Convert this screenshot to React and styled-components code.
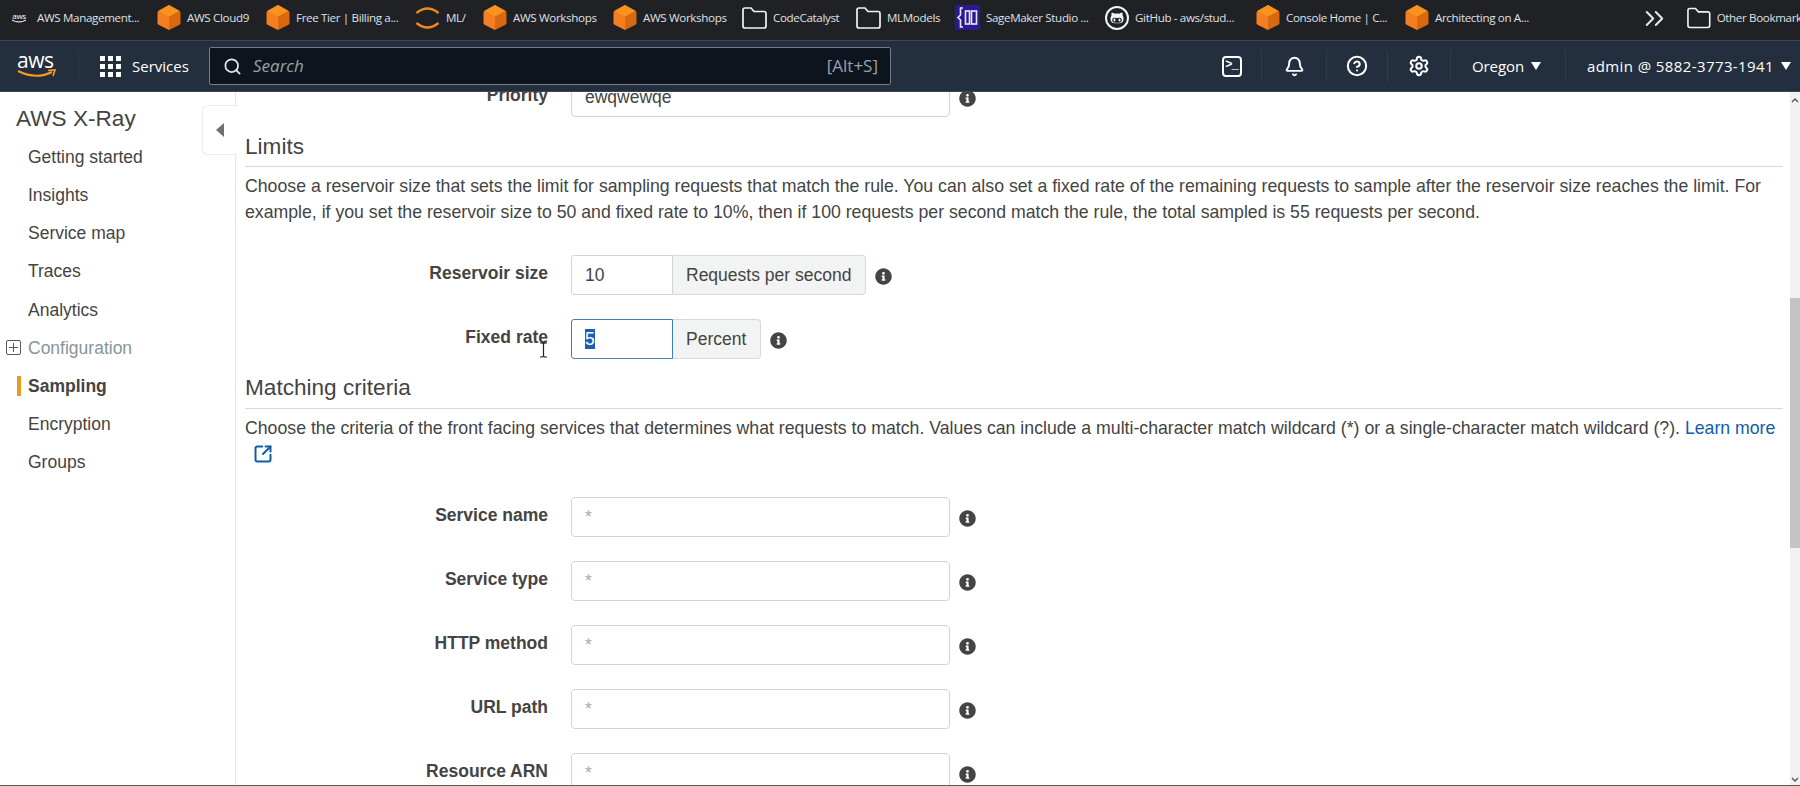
import React from "react";
import styled, { createGlobalStyle } from "styled-components";
import { Bell, ChevronsRight, CircleHelp, Search, Settings, SquareArrowOutUpRight } from "lucide-react";
import { FaGithubAlt, FaInfoCircle } from "react-icons/fa";

const Global = createGlobalStyle`
  html, body { margin: 0; padding: 0; background: #fff; }
  body { font-family: "Liberation Sans", Arial, sans-serif; color: #444; }
  * { box-sizing: border-box; }
`;

const Page = styled.div`
  width: 1800px;
  height: 786px;
  display: flex;
  flex-direction: column;
  overflow: hidden;
`;

/* Bookmark bar */
const BookmarkBar = styled.div`
  flex: none;
  height: 41px;
  padding: 0 0 5px 11px;
  display: flex;
  align-items: center;
  background: #202124;
  border-bottom: 1px solid #3f4650;
  overflow: hidden;
`;
const Bookmark = styled.div`
  flex: none;
  width: ${(p) => p.$w}px;
  display: flex;
  align-items: center;
  gap: ${(p) => p.$gap ?? 6}px;
  font-family: "Open Sans", sans-serif;
  font-size: 11.6px;
  letter-spacing: -0.35px;
  color: #dfe1e5;
  white-space: nowrap;
`;
const FavText = styled.div`
  width: 16px;
  font-size: 8px;
  line-height: 7px;
  text-align: center;
  color: #fff;
  svg { display: block; }
`;
const Overflow = styled.div`
  flex: none;
  margin-left: 107px;
  width: 48px;
  height: 30px;
  color: #e8eaed;
`;
const GitRing = styled.div`
  width: 24px;
  height: 24px;
  border: 2px solid #f1f3f4;
  border-radius: 50%;
  display: flex;
  align-items: center;
  justify-content: center;
  color: #f1f3f4;
`;

const Cube = () => (
  <svg width="24" height="27" viewBox="0 0 24 27">
    <path d="M12 1 L22 6.5 Q23.5 7.4 23.5 9 V19 Q23.5 20.4 22 21 L12 26 Z" fill="#d9690f" />
    <path d="M12 1 L2 6.5 Q.5 7.4 .5 9 V19 Q.5 20.4 2 21 L12 26 Z" fill="#f57f20" />
    <path d="M12 1 L22.5 7 L12 12.5 L1.5 7 Z" fill="#f7931e" />
  </svg>
);
const MlIcon = () => (
  <svg width="25" height="26" viewBox="0 0 25 26" fill="none" stroke="#f08a24" strokeWidth="2.4">
    <path d="M1.5 8 Q12.5 -1 23.5 8" />
    <path d="M1.5 18 Q12.5 27 23.5 18" />
  </svg>
);
const Folder = () => (
  <svg width="25" height="24" viewBox="0 0 25 24" fill="none" stroke="#f1f3f4" strokeWidth="1.7">
    <path d="M1 4 Q1 2 3 2 H9 L12 5.5 H22 Q24 5.5 24 7.5 V20 Q24 22 22 22 H3 Q1 22 1 20 Z" />
  </svg>
);
const SageIcon = () => (
  <svg width="25" height="25" viewBox="0 0 25 25" fill="none">
    <rect width="25" height="25" fill="#2b1a8f" />
    <path d="M8 3 H5.5 V10 L3 12.5 L5.5 15 V22 H8" stroke="#e8e6ff" strokeWidth="1.6" />
    <rect x="10.5" y="6" width="4" height="13" stroke="#e8e6ff" strokeWidth="1.6" />
    <rect x="16.5" y="6" width="5" height="13" stroke="#e8e6ff" strokeWidth="1.6" />
  </svg>
);
const AwsFav = () => (
  <FavText>
    aws
    <svg width="16" height="5" viewBox="0 0 16 5" fill="none" stroke="#fff" strokeWidth="1">
      <path d="M1 1 Q8 5 15 1" />
    </svg>
  </FavText>
);
const GitIcon = () => (
  <GitRing>
    <FaGithubAlt size={14} />
  </GitRing>
);

const bookmarks = [
  { Icon: AwsFav, label: "AWS Management...", w: 146, gap: 10 },
  { Icon: Cube, label: "AWS Cloud9", w: 109 },
  { Icon: Cube, label: "Free Tier | Billing a...", w: 149 },
  { Icon: MlIcon, label: "ML/", w: 68 },
  { Icon: Cube, label: "AWS Workshops", w: 130 },
  { Icon: Cube, label: "AWS Workshops", w: 129 },
  { Icon: Folder, label: "CodeCatalyst", w: 114 },
  { Icon: Folder, label: "MLModels", w: 99 },
  { Icon: SageIcon, label: "SageMaker Studio ...", w: 150 },
  { Icon: GitIcon, label: "GitHub - aws/stud...", w: 151 },
  { Icon: Cube, label: "Console Home | C...", w: 149 },
  { Icon: Cube, label: "Architecting on A...", w: 127 },
];

/* Console nav */
const Nav = styled.header`
  flex: none;
  height: 51px;
  display: flex;
  align-items: center;
  background: #232f3e;
  border-bottom: 1px solid #3c4650;
  color: #fff;
  font-family: "Open Sans", sans-serif;
  font-size: 15px;
`;
const Logo = styled.div`
  flex: none;
  width: 62px;
  margin-left: 17px;
  height: 32px;
  border-right: 1px solid #2d3947;
  font-family: "Open Sans", sans-serif;
  font-size: 21px;
  line-height: 20px;
  color: #fff;
  position: relative;
  letter-spacing: -0.5px;
  svg { display: block; margin-top: -1px; }
`;
const ServicesBtn = styled.div`
  flex: none;
  width: 130px;
  padding-left: 21px;
  display: flex;
  align-items: center;
  gap: 11px;
`;
const SearchBox = styled.div`
  flex: none;
  width: 682px;
  height: 38px;
  padding: 0 12px 0 13px;
  display: flex;
  align-items: center;
  gap: 11px;
  background: #0d141d;
  border: 1px solid #737b84;
  border-radius: 2px;
  color: #9aa2a9;
  font-size: 17px;
  line-height: 34px;
`;
const SearchWord = styled.span`
  flex: 1;
  font-style: italic;
`;
const NavSpacer = styled.div`
  flex: none;
  width: 311px;
`;
const NavIcon = styled.div`
  flex: none;
  width: ${(p) => p.$w}px;
  height: 32px;
  display: flex;
  align-items: center;
  justify-content: center;
  border-right: 1px solid #2f3c4b;
`;
const Term = styled.div`
  width: 20px;
  height: 21px;
  border: 2px solid #fff;
  border-radius: 4px;
  font-family: "Liberation Mono", monospace;
  font-weight: 700;
  font-size: 12px;
  line-height: 15px;
  text-align: center;
  letter-spacing: -1px;
`;
const Menu = styled.div`
  flex: none;
  width: ${(p) => p.$w}px;
  height: 32px;
  padding-left: ${(p) => p.$pl}px;
  display: flex;
  align-items: center;
  gap: 7px;
  white-space: nowrap;
  letter-spacing: ${(p) => p.$ls}px;
  border-right: ${(p) => (p.$plain ? "none" : "1px solid #2f3c4b")};
`;
const Caret = styled.span`
  width: 0;
  height: 0;
  border-left: 5px solid transparent;
  border-right: 5px solid transparent;
  border-top: 8px solid #fff;
`;
const DotGrid = () => (
  <svg width="21" height="21" viewBox="0 0 21 21" fill="#fff">
    {[0, 8, 16].map((y) => [0, 8, 16].map((x) => <rect key={`${x}-${y}`} x={x} y={y} width="5" height="5" />))}
  </svg>
);

/* Body */
const Body = styled.div`
  flex: 1;
  min-height: 0;
  display: flex;
  position: relative;
  border-bottom: 1px solid #5a5a5a;
`;
const Sidebar = styled.aside`
  flex: none;
  width: 236px;
  padding-top: 8px;
  border-right: 1px solid #e3e6e6;
  font-size: 17.5px;
`;
const SideTitle = styled.div`
  height: 36px;
  margin-bottom: 2px;
  padding: 1px 0 0 16px;
  font-size: 22.6px;
  line-height: 36px;
  color: #444;
`;
const SideItem = styled.div`
  position: relative;
  height: 38.125px;
  padding-left: 28px;
  line-height: 38px;
  color: ${(p) => (p.$muted ? "#879596" : "#444")};
  font-weight: ${(p) => (p.$active ? 700 : 400)};
`;
const ActiveBar = styled.span`
  position: absolute;
  left: 17px;
  top: 9px;
  width: 4px;
  height: 20px;
  background: #ec9a1f;
`;
const PlusBox = styled.span`
  position: absolute;
  left: 6px;
  top: 11px;
  width: 15px;
  height: 15px;
  border: 1px solid #545b64;
  border-radius: 2px;
  &::before, &::after {
    content: "";
    position: absolute;
    background: #545b64;
  }
  &::before { left: 2px; right: 2px; top: 6px; height: 1px; }
  &::after { top: 2px; bottom: 2px; left: 6px; width: 1px; }
`;
const CollapseTab = styled.div`
  position: absolute;
  left: 202px;
  top: 13px;
  width: 35px;
  height: 50px;
  display: flex;
  align-items: center;
  padding-left: 13px;
  background: #fff;
  border: 1px solid #eaeded;
  border-right: none;
  border-radius: 6px 0 0 6px;
  &::before {
    content: "";
    border-top: 7px solid transparent;
    border-bottom: 7px solid transparent;
    border-right: 8px solid #6b7278;
  }
`;
const Main = styled.main`
  flex: 1;
  min-width: 0;
  padding: 0 7px 0 9px;
  overflow: hidden;
  font-size: 17.5px;
`;
const Scrolled = styled.div`
  margin-top: -15px;
`;
const Row = styled.div`
  display: flex;
  height: 40px;
  margin-bottom: ${(p) => (p.$last ? 0 : 24)}px;
`;
const Label = styled.div`
  flex: none;
  width: 303px;
  margin-right: 23px;
  text-align: right;
  font-weight: 700;
  line-height: 37px;
  color: #444;
`;
const Field = styled.div`
  flex: none;
  width: ${(p) => p.$w ?? 379}px;
  height: 40px;
  padding-left: 13px;
  line-height: 38px;
  background: #fff;
  border: 1px solid ${(p) => (p.$focus ? "#3b7fc4" : "#d3d5d5")};
  border-radius: ${(p) => (p.$joined ? "3px 0 0 3px" : "4px")};
  color: #444;
`;
const Star = styled.span`
  color: #a9adb0;
`;
const Picked = styled.span`
  background: #1d5fb8;
  color: #fff;
`;
const Addon = styled.div`
  flex: none;
  height: 40px;
  padding: 0 14px 0 13px;
  line-height: 38px;
  background: #f2f3f3;
  border: 1px solid #d5dbdb;
  border-left: none;
  border-radius: 0 4px 4px 0;
  white-space: nowrap;
`;
const Info = styled(FaInfoCircle)`
  flex: none;
  margin: 13px 0 0 9px;
  color: #444;
`;
const Heading = styled.h2`
  margin: 16.5px 0 6px;
  padding-bottom: 6.5px;
  border-bottom: 1px solid #d5dbdb;
  font-size: 22.6px;
  font-weight: 400;
  line-height: 26px;
  color: #444;
`;
const Para = styled.p`
  margin: 0 0 29px;
  font-size: 17.7px;
  line-height: 26.4px;
  color: #444;
`;
const DocLink = styled.a`
  color: #0f5ea8;
  text-decoration: none;
  svg { margin-left: 8px; vertical-align: -4px; }
`;
const Scrollbar = styled.div`
  flex: none;
  width: 10px;
  display: flex;
  flex-direction: column;
  align-items: center;
  padding-top: 206px;
  position: relative;
  background: #f1f1f1;
`;
const Thumb = styled.div`
  width: 10px;
  height: 250px;
  background: #c4c4c4;
`;
const ArrowBtn = styled.svg`
  position: absolute;
  left: 1px;
  ${(p) => (p.$down ? "bottom: 2px;" : "top: 5px;")}
`;
const TextCursor = styled.svg`
  position: absolute;
  left: 539px;
  top: 250px;
`;

const rules = ["Service name", "Service type", "HTTP method", "URL path", "Resource ARN"];

export default function App() {
  return (
    <Page>
      <Global />
      <BookmarkBar>
        {bookmarks.map(({ Icon, label, w, gap }, i) => (
          <Bookmark key={i} $w={w} $gap={gap}>
            <Icon />
            {label}
          </Bookmark>
        ))}
        <Overflow>
          <ChevronsRight size={31} strokeWidth={1.5} />
        </Overflow>
        <Bookmark $w={120}>
          <Folder />
          Other Bookmarks
        </Bookmark>
      </BookmarkBar>

      <Nav>
        <Logo>
          aws
          <svg width="40" height="9" viewBox="0 0 40 9" fill="none">
            <path d="M1 2 Q19 11 35 3" stroke="#f79a1e" strokeWidth="2" />
            <path d="M31 1.5 L38 1 L36 7" stroke="#f79a1e" strokeWidth="1.6" />
          </svg>
        </Logo>
        <ServicesBtn>
          <DotGrid />
          Services
        </ServicesBtn>
        <SearchBox>
          <Search size={19} color="#e5e7e9" strokeWidth={2.2} />
          <SearchWord>Search</SearchWord>
          [Alt+S]
        </SearchBox>
        <NavSpacer />
        <NavIcon $w={60}>
          <Term>&gt;_</Term>
        </NavIcon>
        <NavIcon $w={65}>
          <Bell size={21} strokeWidth={2.2} />
        </NavIcon>
        <NavIcon $w={61}>
          <CircleHelp size={22} strokeWidth={2.2} />
        </NavIcon>
        <NavIcon $w={63}>
          <Settings size={22} strokeWidth={2.2} />
        </NavIcon>
        <Menu $w={115} $pl={21} $ls={-0.1}>
          Oregon <Caret />
        </Menu>
        <Menu $w={234} $pl={21} $ls={0.4} $plain>
          admin @ 5882-3773-1941 <Caret />
        </Menu>
      </Nav>

      <Body>
        <Sidebar>
          <SideTitle>AWS X-Ray</SideTitle>
          <SideItem>Getting started</SideItem>
          <SideItem>Insights</SideItem>
          <SideItem>Service map</SideItem>
          <SideItem>Traces</SideItem>
          <SideItem>Analytics</SideItem>
          <SideItem $muted>
            <PlusBox />
            Configuration
          </SideItem>
          <SideItem $active>
            <ActiveBar />
            Sampling
          </SideItem>
          <SideItem>Encryption</SideItem>
          <SideItem>Groups</SideItem>
        </Sidebar>
        <CollapseTab />
        <Main>
          <Scrolled>
            <Row $last>
              <Label>Priority</Label>
              <Field>ewqwewqe</Field>
              <Info size={17} />
            </Row>
            <Heading>Limits</Heading>
            <Para>
              Choose a reservoir size that sets the limit for sampling requests that match the rule. You can also set a
              fixed rate of the remaining requests to sample after the reservoir size reaches the limit. For example, if
              you set the reservoir size to 50 and fixed rate to 10%, then if 100 requests per second match the rule, the
              total sampled is 55 requests per second.
            </Para>
            <Row>
              <Label>Reservoir size</Label>
              <Field $w={102} $joined>10</Field>
              <Addon>Requests per second</Addon>
              <Info size={17} />
            </Row>
            <Row $last>
              <Label>Fixed rate</Label>
              <Field $w={102} $joined $focus>
                <Picked>5</Picked>
              </Field>
              <Addon>Percent</Addon>
              <Info size={17} />
            </Row>
            <Heading>Matching criteria</Heading>
            <Para>
              Choose the criteria of the front facing services that determines what requests to match. Values can include
              a multi-character match wildcard (*) or a single-character match wildcard (?).{" "}
              <DocLink>
                Learn more <SquareArrowOutUpRight size={20} strokeWidth={2.4} />
              </DocLink>
            </Para>
            {rules.map((r) => (
              <Row key={r}>
                <Label>{r}</Label>
                <Field>
                  <Star>*</Star>
                </Field>
                <Info size={17} />
              </Row>
            ))}
          </Scrolled>
        </Main>
        <Scrollbar>
          <ArrowBtn width="8" height="6" viewBox="0 0 8 6" fill="none" stroke="#555" strokeWidth="1.4">
            <path d="M1 5 L4 2 L7 5" />
          </ArrowBtn>
          <Thumb />
          <ArrowBtn $down width="8" height="6" viewBox="0 0 8 6" fill="none" stroke="#555" strokeWidth="1.4">
            <path d="M1 1 L4 4 L7 1" />
          </ArrowBtn>
        </Scrollbar>
        <TextCursor width="9" height="16" viewBox="0 0 9 16" fill="none" stroke="#222" strokeWidth="1.2">
          <path d="M1 1 H3.5 L4.5 2 L5.5 1 H8 M4.5 2 V14 M1 15 H3.5 L4.5 14 L5.5 15 H8" />
        </TextCursor>
      </Body>
    </Page>
  );
}
